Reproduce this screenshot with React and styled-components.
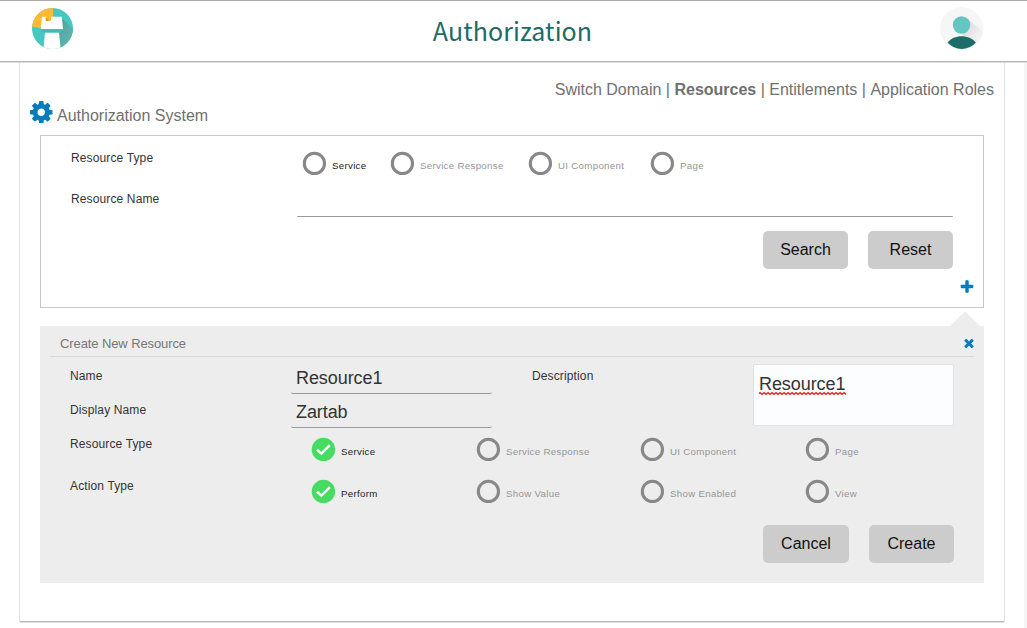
import React from "react";
import styled, { createGlobalStyle } from "styled-components";

const GlobalStyle = createGlobalStyle`
  * { box-sizing: border-box; }
  body {
    margin: 0;
    background: #fff;
    font-family: "Liberation Sans", Arial, sans-serif;
    overflow: hidden;
  }
`;

const Page = styled.div`
  width: 1027px;
  height: 628px;
  display: flex;
  flex-direction: column;
`;

const Header = styled.header`
  height: 62px;
  flex: none;
  display: flex;
  justify-content: space-between;
  align-items: flex-start;
  padding: 6px 44px 0 31px;
  border-top: 1px solid #a9a9a9;
  border-bottom: 1px solid #b0b0b0;
  box-shadow: 0 1px 0 #e2e2e2;
  position: relative;
`;

const Title = styled.h1`
  margin: 0;
  padding: 5px 0 0 12px;
  font: 400 25px/36px "Noto Sans CJK SC", sans-serif;
  letter-spacing: 0.1px;
  color: #1d6b66;
`;

const Body = styled.div`
  flex: 1;
  display: flex;
  justify-content: space-between;
  padding-left: 19px;
`;

const Card = styled.main`
  width: 986px;
  height: 560px;
  border: 1px solid #dedede;
  border-top: 0;
  border-bottom-color: #b3b3b3;
  border-radius: 0 0 2px 2px;
  box-shadow: 0 1px 0 #e2e2e2;
  padding: 19px 20px 0;
`;

const ScrollTrack = styled.div`
  width: 3px;
  background: #f5f5f5;
`;

const Nav = styled.nav`
  display: flex;
  justify-content: flex-end;
  gap: 4.45px;
  margin-right: -10px;
  font-size: 16px;
  line-height: 18px;
  color: #707070;
`;

const NavLink = styled.span`
  font-weight: ${(p) => (p.$active ? 700 : 400)};
`;

const Heading = styled.h2`
  display: flex;
  gap: 4.5px;
  margin: 3px 0 0 -10px;
  height: 33px;
  font-size: 16px;
  font-weight: 400;
  line-height: 28px;
  color: #707070;

  svg { margin-top: -1.5px; }
`;

const SearchBox = styled.section`
  height: 173px;
  border: 1px solid #c8c8c8;
  padding: 13px 10px 0 30px;
`;

const Row = styled.div`
  display: flex;
  align-items: flex-start;
  height: ${(p) => p.$h}px;
`;

const Label = styled.label`
  flex: none;
  width: ${(p) => p.$w}px;
  padding-top: ${(p) => p.$top || 0}px;
  font-size: 12px;
  line-height: 18px;
  letter-spacing: 0.13px;
  color: #333;
`;

const RadioGroup = styled.div`
  display: flex;
  padding-top: 2px;
`;

const Option = styled.div`
  display: flex;
  gap: 6px;
  width: ${(p) => p.$w}px;
  font-size: 9.7px;
  line-height: 29px;
  letter-spacing: 0.31px;
  white-space: nowrap;
  color: ${(p) => (p.$dark ? "#222" : "#959595")};
`;

const Ring = styled.span`
  flex: none;
  width: 24px;
  height: 25px;
  display: flex;

  svg { flex: none; }
`;

const NameLine = styled.div`
  width: 656px;
  height: 27px;
  border-bottom: 1px solid #999;
  border-radius: 1px;
`;

const Actions = styled.div`
  display: flex;
  justify-content: flex-end;
  gap: 20px;
  margin-right: 20px;
`;

const Button = styled.button`
  width: ${(p) => p.$w || 85}px;
  height: 38px;
  padding: 0 0 1px;
  border: 0;
  border-radius: 5px;
  background: #ccc;
  color: #111;
  font: 16px "Liberation Sans", Arial, sans-serif;
`;

const AddRow = styled.div`
  display: flex;
  justify-content: flex-end;
  padding-top: 10px;
  margin-right: -2px;
`;

const Panel = styled.section`
  position: relative;
  height: 257px;
  margin-top: 18px;
  padding: 0 10px;
  background: #ededed;
`;

const Pointer = styled.svg`
  position: absolute;
  top: -14px;
  right: 4px;
`;

const PanelHead = styled.header`
  display: flex;
  justify-content: space-between;
  align-items: center;
  height: 31px;
  padding: 4px 0 0 10px;
  border-bottom: 1px solid #d8d8d8;
  font-size: 13px;
  letter-spacing: -0.1px;
  color: #777;
`;

const PanelForm = styled.div`
  display: flex;
  padding: 7px 20px 0;
  height: 75px;
`;

const Field = styled.div`
  width: 201px;
  height: 30px;
  padding: 3px 5px 0;
  border-bottom: 1px solid #999;
  border-radius: 2px;
  font-size: 18px;
  line-height: 22px;
  letter-spacing: -0.08px;
  color: #333;
`;

const Fields = styled.div`
  width: 462px;
`;

const TextArea = styled.div`
  width: 201px;
  height: 62px;
  margin-left: auto;
  padding: 8px 5px;
  border: 1px solid #dfe3e6;
  border-radius: 2px;
  background: #fbfdff;
  font-size: 18px;
  line-height: 22px;
  letter-spacing: -0.08px;
  color: #333;
`;

const Misspelled = styled.span`
  position: relative;
  display: inline-block;
`;

const Squiggle = styled.svg`
  position: absolute;
  left: 0;
  top: 18px;
`;

const OptionRows = styled.div`
  padding: 3px 20px 0;
`;

const Logo = () => (
  <svg width="42" height="42" viewBox="-0.5 -0.5 42 42">
    <defs>
      <clipPath id="logoDisc"><circle cx="21" cy="21" r="20.5" /></clipPath>
      <linearGradient id="logoShade" x1="0" y1="0" x2="1" y2="1">
        <stop offset="0" stopColor="#4f9f9b" />
        <stop offset="1" stopColor="#66bcb6" />
      </linearGradient>
    </defs>
    <g clipPath="url(#logoDisc)">
      <rect width="42" height="42" fill="#44c8c1" />
      <path d="M30 10L42 22V42H29L27 26L31 22Z" fill="url(#logoShade)" />
      <path d="M0 0H21.500V12L14 20L8 20.500L0 18.500Z" fill="#ffb933" />
      <path d="M10.300 9.300H14.300V13.300H19.500V9.300H30.300L31.500 21.800H9.300Z" fill="#fff" />
      <path d="M14.300 10V13.300H18Z" fill="#d79428" />
      <path d="M13.500 25H27.500L29.200 42H12Z" fill="#fff" />
      <path d="M9.300 21.800H31.500V23.200L27.500 25H13.500L10 24.300Z" fill="#43b9b2" />
    </g>
  </svg>
);

const Avatar = () => (
  <svg width="43" height="43" viewBox="0 0 43 43">
    <defs>
      <clipPath id="avatarDisc"><circle cx="21.500" cy="21.500" r="21.500" /></clipPath>
      <linearGradient id="avatarShade" x1="0" y1="0" x2="1" y2="1">
        <stop offset="0" stopColor="#d5d5d5" />
        <stop offset="0.850" stopColor="#f6f6f6" />
      </linearGradient>
    </defs>
    <g clipPath="url(#avatarDisc)">
      <rect width="43" height="43" fill="#f6f6f6" />
      <path d="M28 12L43 25V40L35 35L22 28Z" fill="url(#avatarShade)" />
      <circle cx="21.500" cy="18" r="8.700" fill="#63c6c1" />
      <path d="M7.500 35.500C14 27 29 27 36 35.500Q30 42 21.700 42T7.500 35.500Z" fill="#1d6d69" />
    </g>
  </svg>
);

const GLYPHS = {
  cog: "M1152 896q0-106-75-181t-181-75-181 75-75 181 75 181 181 75 181-75 75-181zm512-109v222q0 12-8 23t-20 13l-185 28q-19 54-39 91 35 50 107 138 10 12 10 25t-9 23q-27 37-99 108t-94 71q-12 0-26-9l-138-108q-44 23-91 38-16 136-29 186-7 28-36 28h-222q-14 0-24.500-8.500t-11.500-21.500l-28-184q-49-16-90-37l-141 107q-10 9-25 9-14 0-25-11-126-114-165-168-7-10-7-23 0-12 8-23 15-21 51-66.500t54-70.500q-27-50-41-99l-183-27q-13-2-21-12.500t-8-23.500v-222q0-12 8-23t19-13l186-28q14-46 39-92-40-57-107-138-10-12-10-24 0-10 9-23 26-36 98.500-107.500t94.500-71.500q13 0 26 10l138 107q44-23 91-38 16-136 29-186 7-28 36-28h222q14 0 24.500 8.500t11.500 21.500l28 184q49 16 90 37l142-107q9-9 24-9 13 0 25 10 129 119 165 170 7 8 7 22 0 12-8 23-15 21-51 66.500t-54 70.500q26 50 41 98l183 28q13 2 21 12.500t8 23.500z",
  plus: "M1600 736v192q0 40-28 68t-68 28h-416v416q0 40-28 68t-68 28h-192q-40 0-68-28t-28-68v-416h-416q-40 0-68-28t-28-68v-192q0-40 28-68t68-28h416v-416q0-40 28-68t68-28h192q40 0 68 28t28 68v416h416q40 0 68 28t28 68z",
  times: "M1490 1322q0 40-28 68l-136 136q-28 28-68 28t-68-28l-294-294-294 294q-28 28-68 28t-68-28l-136-136q-28-28-28-68t28-68l294-294-294-294q-28-28-28-68t28-68l136-136q28-28 68-28t68 28l294 294 294-294q28-28 68-28t68 28l136 136q28 28 28 68t-28 68l-294 294 294 294q28 28 28 68z",
};

const Glyph = ({ name, w, h, box }) => (
  <svg width={w} height={h} viewBox={box}>
    <path d={GLYPHS[name]} fill="#047cbc" />
  </svg>
);

const Radio = ({ text, checked, dark, w }) => (
  <Option $dark={dark || checked} $w={w}>
    <Ring>
      <svg width="25" height="25" viewBox="-0.4 -0.4 25 25">
        {checked ? (
          <>
            <circle cx="12" cy="12" r="11.700" fill="#48db62" />
            <path d="M5.500 12.200L9.900 16.300L18.500 7.700" fill="none" stroke="#fff" strokeWidth="2.400" />
          </>
        ) : (
          <circle cx="12" cy="12" r="10.100" fill="none" stroke="#888" strokeWidth="3.100" />
        )}
      </svg>
    </Ring>
    {text}
  </Option>
);

const NAV = ["Switch Domain", "Resources", "Entitlements", "Application Roles"];
const TYPES = ["Service", "Service Response", "UI Component", "Page"];
const TYPE_WIDTHS = [88, 138, 122, 60];
const ACTIONS = ["Perform", "Show Value", "Show Enabled", "View"];
const COLUMN_WIDTHS = [165, 164, 165, 60];

export default function App() {
  return (
    <Page>
      <GlobalStyle />
      <Header>
        <Logo />
        <Title>Authorization</Title>
        <Avatar />
      </Header>
      <Body>
        <Card>
          <Nav>
            {NAV.map((item, i) => (
              <React.Fragment key={item}>
                {i > 0 && <span>|</span>}
                <NavLink $active={item === "Resources"}>{item}</NavLink>
              </React.Fragment>
            ))}
          </Nav>
          <Heading>
            <Glyph name="cog" w={22.5} h={22.5} box="128 128 1536 1536" />
            Authorization System
          </Heading>

          <SearchBox>
            <Row $h={41}>
              <Label $w={231}>Resource Type</Label>
              <RadioGroup>
                {TYPES.map((t, i) => (
                  <Radio key={t} text={t} dark={i === 0} w={TYPE_WIDTHS[i]} />
                ))}
              </RadioGroup>
            </Row>
            <Row $h={41}>
              <Label $w={226}>Resource Name</Label>
              <NameLine />
            </Row>
            <Actions>
              <Button>Search</Button>
              <Button>Reset</Button>
            </Actions>
            <AddRow>
              <Glyph name="plus" w={16} h={16} box="0 0 1792 1792" />
            </AddRow>
          </SearchBox>

          <Panel>
            <Pointer width="30" height="14" viewBox="0 0 30 14">
              <path d="M0 14L15 -0.500L30 14Z" fill="#ededed" />
            </Pointer>
            <PanelHead>
              Create New Resource
              <Glyph name="times" w={10} h={10} box="250 250 1292 1292" />
            </PanelHead>
            <PanelForm>
              <Fields>
                <Row $h={34}>
                  <Label $w={221} $top={3}>Name</Label>
                  <Field>Resource1</Field>
                </Row>
                <Row $h={34}>
                  <Label $w={221} $top={3}>Display Name</Label>
                  <Field>Zartab</Field>
                </Row>
              </Fields>
              <Label $w={200} $top={3}>Description</Label>
              <TextArea>
                <Misspelled>
                  Resource1
                  <Squiggle width="87" height="4" viewBox="0 0 87 4">
                    <defs>
                      <pattern id="wave" width="4" height="4" patternUnits="userSpaceOnUse">
                        <path d="M-1 3.500L1 1.500L3 3.500L5 1.500" fill="none" stroke="#f00" strokeWidth="1.100" />
                      </pattern>
                    </defs>
                    <rect width="87" height="4" fill="url(#wave)" />
                  </Squiggle>
                </Misspelled>
              </TextArea>
            </PanelForm>
            <OptionRows>
              <Row $h={42}>
                <Label $w={241}>Resource Type</Label>
                <RadioGroup>
                  {TYPES.map((t, i) => (
                    <Radio key={t} text={t} checked={i === 0} w={COLUMN_WIDTHS[i]} />
                  ))}
                </RadioGroup>
              </Row>
              <Row $h={48}>
                <Label $w={241}>Action Type</Label>
                <RadioGroup>
                  {ACTIONS.map((t, i) => (
                    <Radio key={t} text={t} checked={i === 0} w={COLUMN_WIDTHS[i]} />
                  ))}
                </RadioGroup>
              </Row>
            </OptionRows>
            <Actions>
              <Button $w={86}>Cancel</Button>
              <Button>Create</Button>
            </Actions>
          </Panel>
        </Card>
        <ScrollTrack />
      </Body>
    </Page>
  );
}
